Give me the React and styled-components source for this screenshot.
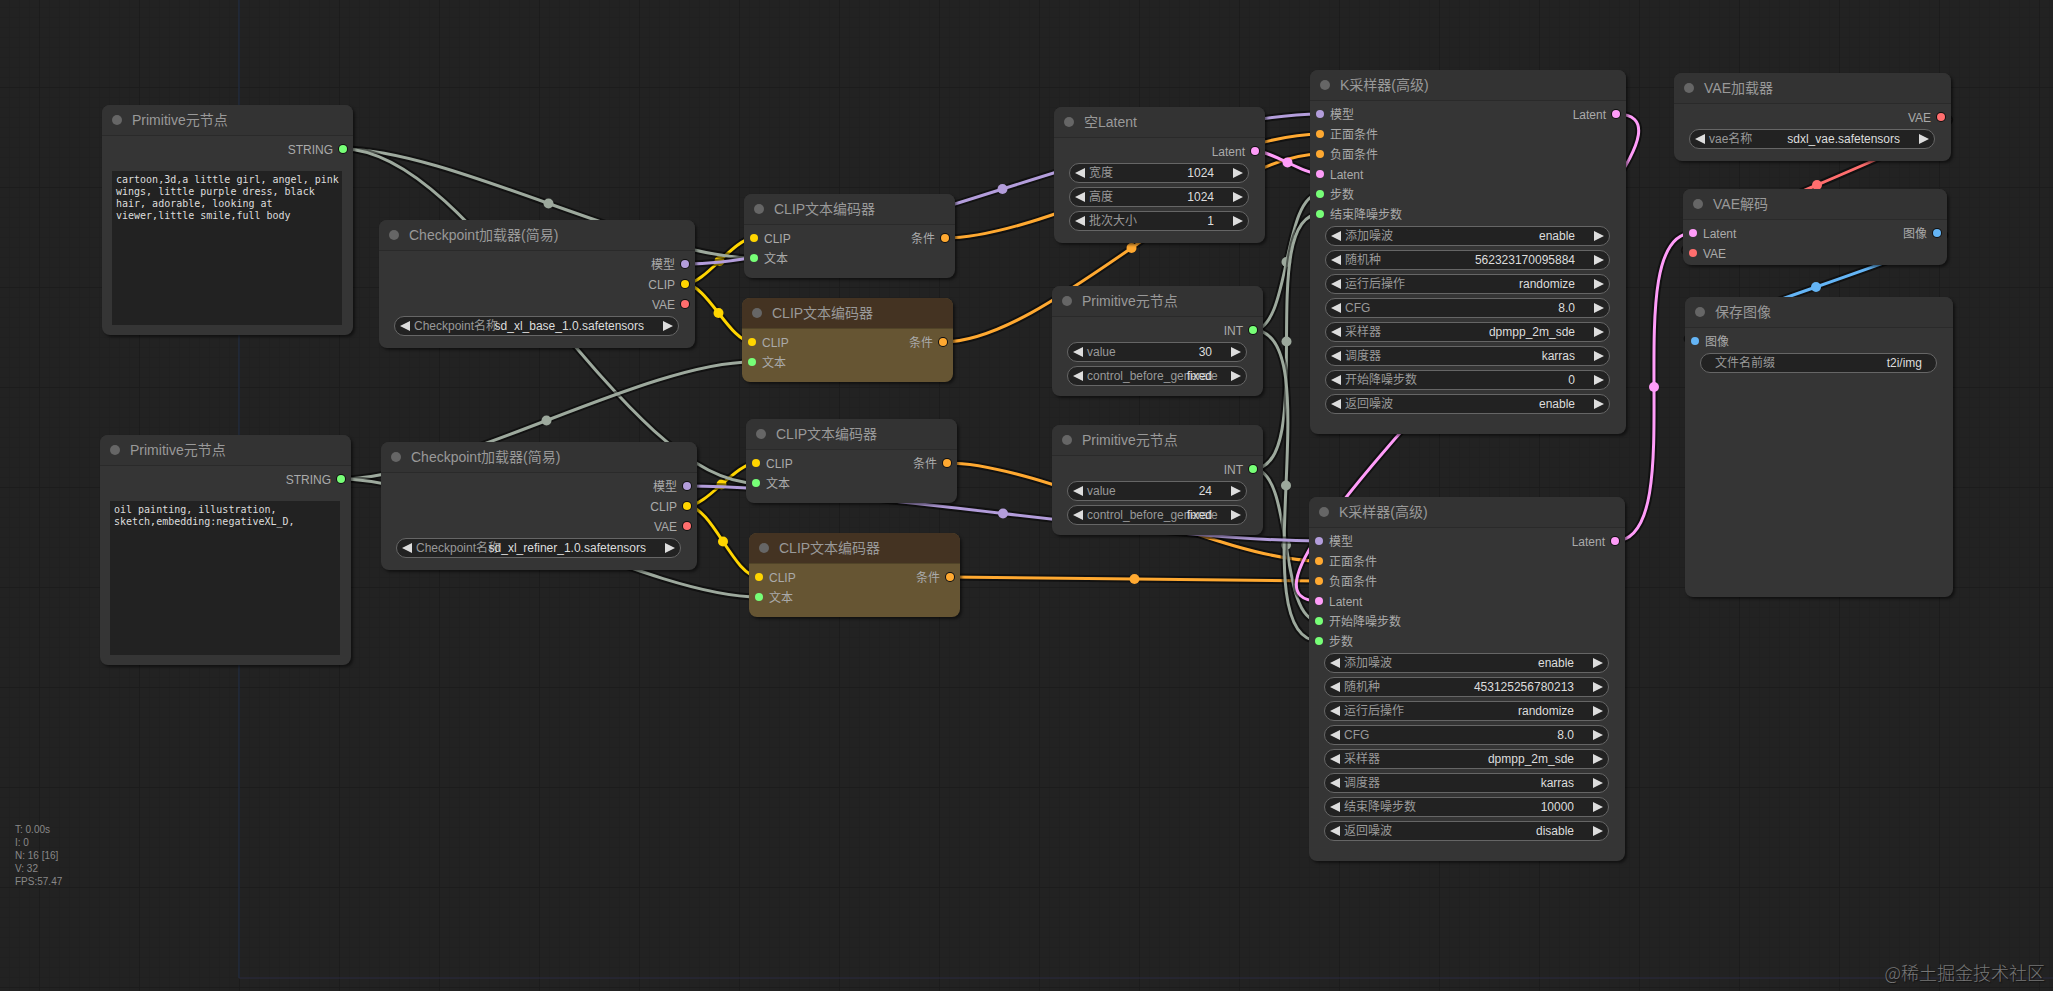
import React, { useId } from "react";
import styled, { createGlobalStyle } from "styled-components";

const COLORS = {
  CLIP: "#ffd500",
  CONDITIONING: "#ffa931",
  LATENT: "#ff9cf9",
  MODEL: "#b39ddb",
  VAE: "#ff6e6e",
  IMAGE: "#64b5f6",
  VALUE: "#77ff77",
  LINK: "#9da99d",
};

const TITLE_HEIGHT = 30;
const SLOT_HEIGHT = 20;

const slot = (label, type) => ({ label, type });
const combo = (label, value) => ({ kind: "combo", label, value });
const number = (label, value) => ({ kind: "number", label, value });
const text = (label, value) => ({ kind: "text", label, value });

const checkpoint = {
  title: "Checkpoint加载器(简易)",
  w: 316,
  h: 128,
  outputs: [slot("模型", "MODEL"), slot("CLIP", "CLIP"), slot("VAE", "VAE")],
};

const clipEncoder = {
  title: "CLIP文本编码器",
  w: 211,
  h: 84,
  inputs: [slot("CLIP", "CLIP"), slot("文本", "VALUE")],
  outputs: [slot("条件", "CONDITIONING")],
};

const intPrimitive = {
  title: "Primitive元节点",
  w: 211,
  h: 110,
  outputs: [slot("INT", "VALUE")],
};

const sampler = {
  title: "K采样器(高级)",
  w: 316,
  h: 364,
  outputs: [slot("Latent", "LATENT")],
};

const samplerInputs = [
  slot("模型", "MODEL"),
  slot("正面条件", "CONDITIONING"),
  slot("负面条件", "CONDITIONING"),
  slot("Latent", "LATENT"),
];

const nodes = {
  positiveText: {
    title: "Primitive元节点",
    x: 102,
    y: 105,
    w: 251,
    h: 230,
    outputs: [slot("STRING", "VALUE")],
    prompt:
      "cartoon,3d,a little girl, angel, pink wings, little purple dress, black hair, adorable, looking at viewer,little smile,full body",
  },
  negativeText: {
    title: "Primitive元节点",
    x: 100,
    y: 435,
    w: 251,
    h: 230,
    outputs: [slot("STRING", "VALUE")],
    prompt: "oil painting, illustration, sketch,embedding:negativeXL_D,",
  },
  baseModel: {
    ...checkpoint,
    x: 379,
    y: 220,
    widgets: [combo("Checkpoint名称", "sd_xl_base_1.0.safetensors")],
  },
  refinerModel: {
    ...checkpoint,
    x: 381,
    y: 442,
    widgets: [combo("Checkpoint名称", "sd_xl_refiner_1.0.safetensors")],
  },
  basePositive: { ...clipEncoder, x: 744, y: 194 },
  baseNegative: { ...clipEncoder, x: 742, y: 298, brown: true },
  refinerPositive: { ...clipEncoder, x: 746, y: 419 },
  refinerNegative: { ...clipEncoder, x: 749, y: 533, brown: true },
  emptyLatent: {
    title: "空Latent",
    x: 1054,
    y: 107,
    w: 211,
    h: 136,
    outputs: [slot("Latent", "LATENT")],
    widgets: [number("宽度", "1024"), number("高度", "1024"), number("批次大小", "1")],
  },
  totalSteps: {
    ...intPrimitive,
    x: 1052,
    y: 286,
    widgets: [number("value", "30"), combo("control_before_generate", "fixed")],
  },
  baseSteps: {
    ...intPrimitive,
    x: 1052,
    y: 425,
    widgets: [number("value", "24"), combo("control_before_generate", "fixed")],
  },
  baseSampler: {
    ...sampler,
    x: 1310,
    y: 70,
    inputs: [...samplerInputs, slot("步数", "VALUE"), slot("结束降噪步数", "VALUE")],
    widgets: [
      combo("添加噪波", "enable"),
      number("随机种", "562323170095884"),
      combo("运行后操作", "randomize"),
      number("CFG", "8.0"),
      combo("采样器", "dpmpp_2m_sde"),
      combo("调度器", "karras"),
      number("开始降噪步数", "0"),
      combo("返回噪波", "enable"),
    ],
  },
  refinerSampler: {
    ...sampler,
    x: 1309,
    y: 497,
    inputs: [...samplerInputs, slot("开始降噪步数", "VALUE"), slot("步数", "VALUE")],
    widgets: [
      combo("添加噪波", "enable"),
      number("随机种", "453125256780213"),
      combo("运行后操作", "randomize"),
      number("CFG", "8.0"),
      combo("采样器", "dpmpp_2m_sde"),
      combo("调度器", "karras"),
      number("结束降噪步数", "10000"),
      combo("返回噪波", "disable"),
    ],
  },
  vaeLoader: {
    title: "VAE加载器",
    x: 1674,
    y: 73,
    w: 277,
    h: 88,
    outputs: [slot("VAE", "VAE")],
    widgets: [combo("vae名称", "sdxl_vae.safetensors")],
  },
  vaeDecode: {
    title: "VAE解码",
    x: 1683,
    y: 189,
    w: 264,
    h: 76,
    inputs: [slot("Latent", "LATENT"), slot("VAE", "VAE")],
    outputs: [slot("图像", "IMAGE")],
  },
  saveImage: {
    title: "保存图像",
    x: 1685,
    y: 297,
    w: 268,
    h: 300,
    inputs: [slot("图像", "IMAGE")],
    widgets: [text("文件名前缀", "t2i/img")],
  },
};

// [from node, output index, to node, input index, colour], painted in order
const links = [
  ["baseModel", 1, "basePositive", 0, "CLIP"],
  ["baseModel", 1, "baseNegative", 0, "CLIP"],
  ["refinerModel", 1, "refinerPositive", 0, "CLIP"],
  ["refinerModel", 1, "refinerNegative", 0, "CLIP"],
  ["basePositive", 0, "baseSampler", 1, "CONDITIONING"],
  ["baseNegative", 0, "baseSampler", 2, "CONDITIONING"],
  ["refinerPositive", 0, "refinerSampler", 1, "CONDITIONING"],
  ["refinerNegative", 0, "refinerSampler", 2, "CONDITIONING"],
  ["positiveText", 0, "basePositive", 1, "LINK"],
  ["positiveText", 0, "refinerPositive", 1, "LINK"],
  ["negativeText", 0, "baseNegative", 1, "LINK"],
  ["negativeText", 0, "refinerNegative", 1, "LINK"],
  ["totalSteps", 0, "baseSampler", 4, "LINK"],
  ["baseSteps", 0, "baseSampler", 5, "LINK"],
  ["baseSteps", 0, "refinerSampler", 4, "LINK"],
  ["totalSteps", 0, "refinerSampler", 5, "LINK"],
  ["baseModel", 0, "baseSampler", 0, "MODEL"],
  ["refinerModel", 0, "refinerSampler", 0, "MODEL"],
  ["emptyLatent", 0, "baseSampler", 3, "LATENT"],
  ["baseSampler", 0, "refinerSampler", 3, "LATENT"],
  ["refinerSampler", 0, "vaeDecode", 0, "LATENT"],
  ["vaeLoader", 0, "vaeDecode", 1, "VAE"],
  ["vaeDecode", 0, "saveImage", 0, "IMAGE"],
];

const slotY = (node, index) => node.y + TITLE_HEIGHT + SLOT_HEIGHT * index + 14;

function Link({ link }) {
  const [from, output, to, input, type] = link;
  const x1 = nodes[from].x + nodes[from].w - 10;
  const y1 = slotY(nodes[from], output);
  const x2 = nodes[to].x + 10;
  const y2 = slotY(nodes[to], input);
  const bend = Math.hypot(x2 - x1, y2 - y1) / 4;
  const d = `M${x1} ${y1} C${x1 + bend} ${y1} ${x2 - bend} ${y2} ${x2} ${y2}`;

  return (
    <g fill="none">
      <path d={d} stroke="#000" strokeOpacity="0.5" strokeWidth="7" />
      <path d={d} stroke={COLORS[type]} strokeWidth="3" />
      <circle cx={(x1 + x2) / 2} cy={(y1 + y2) / 2} r="5" fill={COLORS[type]} />
    </g>
  );
}

function Arrow({ label, points }) {
  return (
    <ArrowButton type="button" aria-label={label}>
      <svg width="10" height="10" viewBox="0 0 10 10" aria-hidden="true">
        <polygon points={points} fill="#ddd" />
      </svg>
    </ArrowButton>
  );
}

function Widget({ widget }) {
  const id = useId();
  const { kind, label, value } = widget;
  const hasArrows = kind !== "text";

  return (
    <WidgetBox>
      {hasArrows && <Arrow label={`${label} -`} points="10,0 0,5 10,10" />}
      <Field $wide={!hasArrows}>
        <label htmlFor={id}>{label}</label>
        {kind === "combo" ? (
          <select id={id} defaultValue={value}>
            <option>{value}</option>
          </select>
        ) : (
          <input id={id} type="text" defaultValue={value} />
        )}
      </Field>
      {hasArrows && <Arrow label={`${label} +`} points="0,0 10,5 0,10" />}
    </WidgetBox>
  );
}

function Node({ node }) {
  const { title, inputs = [], outputs = [], widgets = [], prompt } = node;

  return (
    <NodeBox $x={node.x} $y={node.y} $w={node.w} $h={node.h} $brown={node.brown}>
      <NodeTitle $brown={node.brown}>
        <Collapse type="button" aria-label="collapse" />
        <h2>{title}</h2>
      </NodeTitle>
      <Slots>
        <SlotList>
          {inputs.map((item) => (
            <Slot key={item.label}>
              <Dot $color={COLORS[item.type]} />
              <SlotLabel>{item.label}</SlotLabel>
            </Slot>
          ))}
        </SlotList>
        <SlotList>
          {outputs.map((item) => (
            <Slot key={item.label} $output>
              <SlotLabel>{item.label}</SlotLabel>
              <Dot $color={COLORS[item.type]} $output />
            </Slot>
          ))}
        </SlotList>
      </Slots>
      {widgets.length > 0 && (
        <Widgets>
          {widgets.map((widget) => (
            <Widget key={widget.label} widget={widget} />
          ))}
        </Widgets>
      )}
      {prompt && (
        <Prompt aria-label={title} spellCheck="false" defaultValue={prompt} />
      )}
    </NodeBox>
  );
}

function App() {
  return (
    <Canvas>
      <GlobalStyle />
      <Links>
        <line x1="239" y1="0" x2="239" y2="978" stroke="#22304a" />
        <line x1="239" y1="978" x2="100%" y2="978" stroke="#2a2a40" />
        {links.map((link, index) => (
          <Link key={index} link={link} />
        ))}
      </Links>
      {Object.entries(nodes).map(([key, node]) => (
        <Node key={key} node={node} />
      ))}
      <Stats>
        <span>T: 0.00s</span>
        <span>I: 0</span>
        <span>N: 16 [16]</span>
        <span>V: 32</span>
        <span>FPS:57.47</span>
      </Stats>
      <Watermark>@稀土掘金技术社区</Watermark>
    </Canvas>
  );
}

export default App;

const GlobalStyle = createGlobalStyle`
  * {
    box-sizing: border-box;
  }

  body {
    margin: 0;
    background-color: #222;
    font-family: "Liberation Sans", "Noto Sans CJK SC", sans-serif;
  }

  button,
  input,
  select,
  textarea {
    margin: 0;
    padding: 0;
    border: none;
    outline: none;
    background: none;
    font-family: inherit;
  }
`;

const Canvas = styled.main`
  position: relative;
  min-height: 100vh;
  overflow: hidden;
  background-color: #222;
  background-image: linear-gradient(to right, #1c1c1c 1px, transparent 1px),
    linear-gradient(to bottom, #1c1c1c 1px, transparent 1px),
    linear-gradient(to right, #202020 1px, transparent 1px),
    linear-gradient(to bottom, #202020 1px, transparent 1px);
  background-size: 100px 100px, 100px 100px, 10px 10px, 10px 10px;
  background-position: 39px 87px, 39px 87px, 9px 7px, 9px 7px;
`;

const Links = styled.svg`
  position: absolute;
  inset: 0;
  width: 100%;
  height: 100%;
`;

const NodeBox = styled.section`
  position: absolute;
  left: ${({ $x }) => $x}px;
  top: ${({ $y }) => $y}px;
  width: ${({ $w }) => $w}px;
  min-height: ${({ $h }) => $h}px;
  display: flex;
  flex-direction: column;
  border-radius: 8px;
  background-color: ${({ $brown }) => ($brown ? "#665533" : "#353535")};
  box-shadow: 2px 2px 3px rgba(0, 0, 0, 0.5);
  color: #aaa;
  font-size: 12px;
`;

const NodeTitle = styled.header`
  display: flex;
  align-items: center;
  gap: 10px;
  height: ${TITLE_HEIGHT}px;
  padding: 0 10px;
  border-radius: 8px 8px 0 0;
  background-color: ${({ $brown }) => ($brown ? "#443322" : "#333")};
  box-shadow: 0 1px 0 rgba(0, 0, 0, 0.2);

  h2 {
    margin: 0;
    color: #999;
    font-size: 14px;
    font-weight: 400;
    line-height: 20px;
    white-space: nowrap;
  }
`;

const Collapse = styled.button`
  width: 10px;
  height: 10px;
  border-radius: 50%;
  background-color: #666;
`;

const Slots = styled.div`
  display: flex;
  justify-content: space-between;
  padding: 4px 6px 0;
`;

const SlotList = styled.ul`
  margin: 0;
  padding: 0;
  list-style: none;
`;

const Slot = styled.li`
  display: flex;
  align-items: center;
  justify-content: ${({ $output }) => ($output ? "flex-end" : "flex-start")};
  gap: 6px;
  height: ${SLOT_HEIGHT}px;
`;

const SlotLabel = styled.span`
  padding-top: 2px;
  line-height: 18px;
  white-space: nowrap;
`;

const Dot = styled.span`
  width: 8px;
  height: 8px;
  border-radius: 50%;
  background-color: ${({ $color }) => $color};
  box-shadow: ${({ $output }) => ($output ? "0 0 0 1px #111" : "none")};
`;

const Widgets = styled.div`
  display: flex;
  flex-direction: column;
  gap: 4px;
  padding: 2px 16px 0 15px;
`;

const WidgetBox = styled.div`
  display: flex;
  align-items: center;
  height: 20px;
  padding: 0 5px;
  border: 1px solid #666;
  border-radius: 10px;
  background-color: #222;
`;

const ArrowButton = styled.button`
  display: flex;
  flex: none;
  width: 10px;
  height: 10px;
`;

/* The name and its value share one cell, so a long name runs under the value */
const Field = styled.div`
  display: grid;
  flex: 1;
  min-width: 0;
  margin: ${({ $wide }) => ($wide ? "0 9px" : "0 19px 0 4px")};
  line-height: 18px;

  label,
  input,
  select {
    grid-area: 1 / 1;
    min-width: 0;
    height: 18px;
    font-size: 12px;
    white-space: nowrap;
  }

  label {
    color: #999;
  }

  input,
  select {
    width: 100%;
    appearance: none;
    color: #ddd;
    text-align: right;
    text-align-last: right;
  }
`;

const Prompt = styled.textarea`
  flex: 1;
  margin: 12px 11px 10px 10px;
  padding: 3px 2px 3px 4px;
  resize: none;
  overflow: hidden;
  background-color: #222;
  color: #ddd;
  font-family: "DejaVu Sans Mono", monospace;
  font-size: 10px;
  line-height: 12px;
`;

const Stats = styled.div`
  position: absolute;
  left: 15px;
  bottom: 103px;
  display: flex;
  flex-direction: column;
  color: #888;
  font-size: 10px;
  line-height: 13px;
`;

const Watermark = styled.div`
  position: absolute;
  right: 8px;
  bottom: 6px;
  color: #777;
  font-family: "Noto Sans CJK SC", sans-serif;
  font-size: 18px;
  font-weight: 300;
  line-height: 26px;
  text-shadow: 1px 1px 1px #111;
`;
